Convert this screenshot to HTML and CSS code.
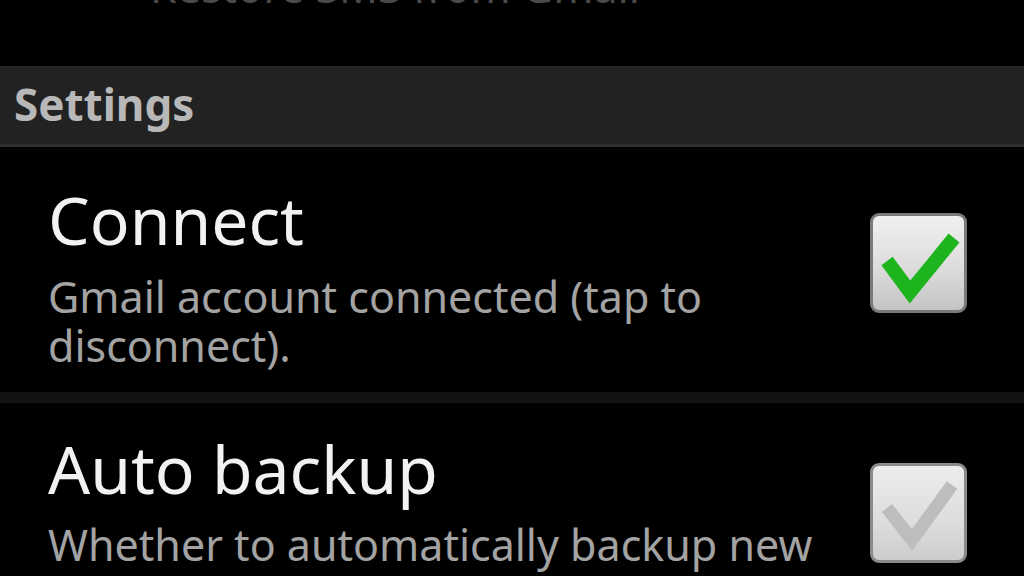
FILE: index.html
```html
<!DOCTYPE html>
<html lang="en">
<head>
<meta charset="utf-8">
<title>Settings</title>
<link rel="stylesheet" href="styles.css">
</head>
<body>
<div class="screen">
  <div class="prev"><p class="prev-text">Restore SMS from Gmail</p></div>
  <div class="section-header">Settings</div>
  <div class="pref pref-first">
    <div class="pref-text">
      <div class="pref-title">Connect</div>
      <div class="pref-summary">Gmail account connected (tap to disconnect).</div>
    </div>
    <div class="checkbox checkbox-on">
      <svg viewBox="0 0 97 100" width="97" height="100" aria-hidden="true">
        <polyline points="17,48 40,79 84,25" fill="none" stroke="#1eb41e" stroke-width="14" stroke-linejoin="miter"/>
      </svg>
    </div>
  </div>
  <div class="divider"></div>
  <div class="pref pref-second">
    <div class="pref-text">
      <div class="pref-title">Auto backup</div>
      <div class="pref-summary">Whether to automatically backup new messages</div>
    </div>
    <div class="checkbox checkbox-off">
      <svg viewBox="0 0 97 100" width="97" height="100" aria-hidden="true">
        <polyline points="17,45 42,77 82,22" fill="none" stroke="#bdbdbd" stroke-width="13" stroke-linejoin="miter"/>
      </svg>
    </div>
  </div>
</div>
</body>
</html>
```
FILE: styles.css
```css
html, body {
  margin: 0;
  padding: 0;
  background: #000;
}
.screen {
  width: 1024px;
  height: 576px;
  overflow: hidden;
  background: #000;
  font-family: "Noto Sans", "Open Sans", "DejaVu Sans", sans-serif;
}
.prev {
  height: 66px;
  overflow: hidden;
}
.prev-text {
  margin: -38px 0 0 0;
  padding-left: 150px;
  font-size: 43px;
  line-height: 49px;
  color: #4a4a4a;
  white-space: nowrap;
}
.section-header {
  box-sizing: border-box;
  height: 81px;
  background: #222;
  border-top: 1px solid #2a2a2a;
  border-bottom: 3px solid #2f2f2f;
  padding-left: 14px;
  font-weight: bold;
  font-size: 44px;
  line-height: 74px;
  color: #b8b8b8;
}
.pref {
  display: flex;
  align-items: flex-start;
  padding: 0 57px 0 48px;
}
.pref-first {
  height: 245px;
  padding-top: 37px;
  box-sizing: border-box;
}
.pref-second {
  padding-top: 30px;
}
.pref-text {
  flex: 1;
  min-width: 0;
  padding-right: 30px;
}
.pref-title {
  font-size: 66px;
  line-height: 70px;
  color: #f2f2f2;
}
.pref-summary {
  margin-top: 18px;
  font-size: 43px;
  line-height: 49px;
  color: #a3a3a3;
}
.pref-second .pref-summary {
  margin-top: 17px;
}
.divider {
  height: 11px;
  background: #131313;
}
.checkbox {
  flex: none;
  width: 97px;
  height: 100px;
  box-sizing: border-box;
  border-radius: 9px;
  border: 3px solid #7a7a7a;
}
.checkbox svg {
  display: block;
  margin: -3px;
}
.pref-first .checkbox {
  margin-top: 29px;
}
.pref-second .checkbox {
  margin-top: 30px;
}
.checkbox-on {
  background: linear-gradient(to bottom, #f0f0f0 0%, #dcdcdc 55%, #c4c4c4 100%);
}
.checkbox-off {
  background: linear-gradient(to bottom, #ececec 0%, #dddddd 60%, #cdcdcd 100%);
  border-color: #8a8a8a;
}
```
